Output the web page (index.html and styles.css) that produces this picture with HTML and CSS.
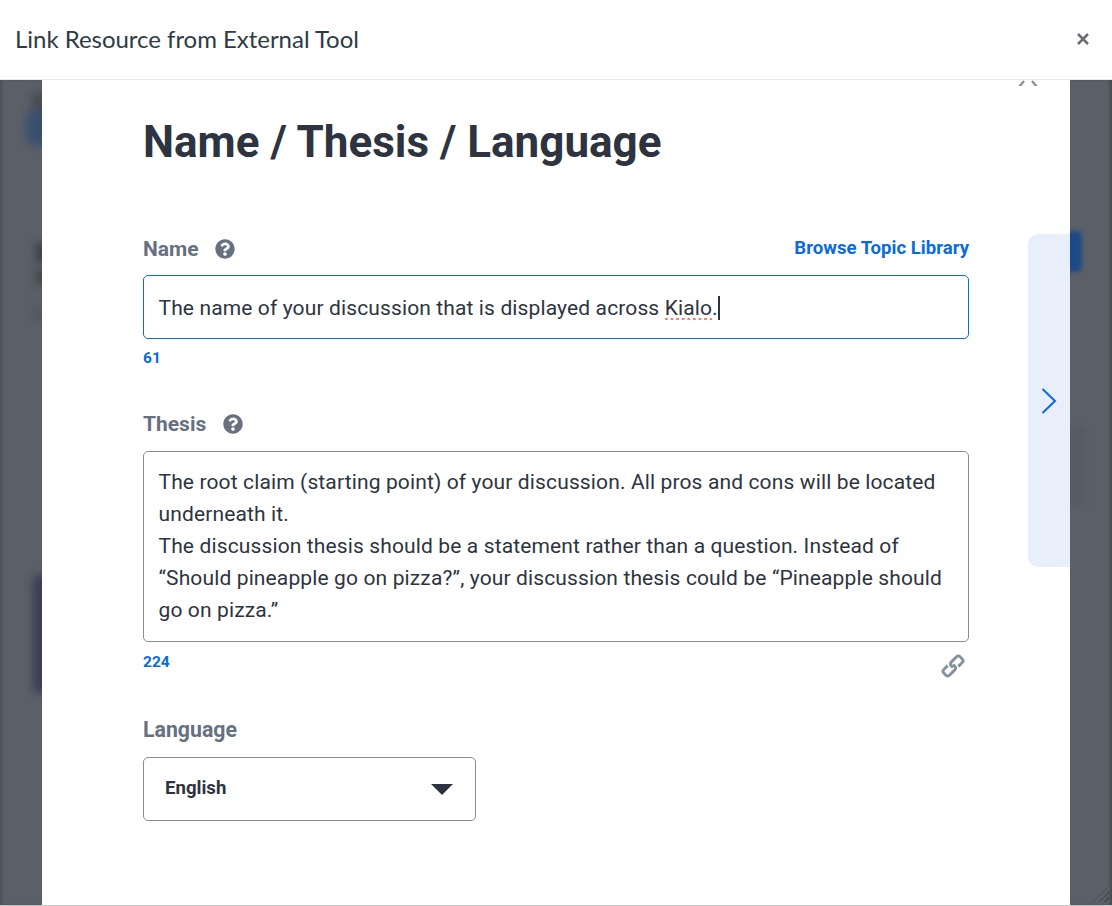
FILE: index.html
```html
<!DOCTYPE html>
<html lang="en">
<head>
    <meta charset="UTF-8">
    <meta name="viewport" content="width=device-width, initial-scale=1.0">
    <title>Link Resource from External Tool</title>
    <link rel="stylesheet" href="styles.css">
</head>
<body>
<div class="dialog">
    <header class="dialog-header">
        <h1>Link Resource from External Tool</h1>
        <svg class="dialog-close" viewBox="0 0 14 14" width="14" height="14" aria-label="Close">
            <path d="M2 2 12 12M12 2 2 12" fill="none" stroke="#6a6f75" stroke-width="2.6"/>
        </svg>
    </header>

    <div class="dialog-body">
        <div class="backdrop">
            <span class="blob blob-logo-top"></span>
            <span class="blob blob-logo"></span>
            <span class="blob blob-letter"></span>
            <span class="blob blob-letter-low"></span>
            <span class="blob blob-small"></span>
            <span class="blob blob-purple"></span>
            <span class="blob blob-button"></span>
            <span class="blob blob-faint"></span>
            <span class="resize-grip"></span>
        </div>

        <main class="sheet">
            <svg class="sheet-close" viewBox="0 0 20 6" width="20" height="6">
                <path d="M1 7 6 1M19 7 14 1" fill="none" stroke="#8b95a1" stroke-width="2.4"/>
            </svg>

            <h2>Name / Thesis / Language</h2>

            <div class="label-row label-row-name">
                <label>Name</label>
                <svg class="help-icon" viewBox="0 0 512 512" width="20" height="20">
                    <path d="M504 256c0 136.997-111.043 248-248 248S8 392.997 8 256C8 119.083 119.043 8 256 8s248 111.083 248 248zM262.655 90c-54.497 0-89.255 22.957-116.549 63.758-3.536 5.286-2.353 12.415 2.715 16.258l34.699 26.31c5.205 3.947 12.621 3.008 16.665-2.122 17.864-22.658 30.113-35.797 57.303-35.797 20.429 0 45.698 13.148 45.698 32.958 0 14.976-12.363 22.667-32.534 33.976C247.128 238.528 216 254.941 216 296v4c0 6.627 5.373 12 12 12h56c6.627 0 12-5.373 12-12v-1.333c0-28.462 83.186-29.647 83.186-106.667 0-58.002-60.165-102-116.531-102zM256 338c-25.365 0-46 20.635-46 46 0 25.364 20.635 46 46 46s46-20.636 46-46c0-25.365-20.635-46-46-46z" fill="#667080"/>
                </svg>
                <a class="browse-link" href="#">Browse Topic Library</a>
            </div>
            <div class="field field-name">
                <span>The name of your discussion that is displayed across <span class="misspelled">Kialo</span>.</span><span class="caret"></span>
            </div>
            <div class="counter">61</div>

            <div class="label-row label-row-thesis">
                <label>Thesis</label>
                <svg class="help-icon" viewBox="0 0 512 512" width="20" height="20">
                    <path d="M504 256c0 136.997-111.043 248-248 248S8 392.997 8 256C8 119.083 119.043 8 256 8s248 111.083 248 248zM262.655 90c-54.497 0-89.255 22.957-116.549 63.758-3.536 5.286-2.353 12.415 2.715 16.258l34.699 26.31c5.205 3.947 12.621 3.008 16.665-2.122 17.864-22.658 30.113-35.797 57.303-35.797 20.429 0 45.698 13.148 45.698 32.958 0 14.976-12.363 22.667-32.534 33.976C247.128 238.528 216 254.941 216 296v4c0 6.627 5.373 12 12 12h56c6.627 0 12-5.373 12-12v-1.333c0-28.462 83.186-29.647 83.186-106.667 0-58.002-60.165-102-116.531-102zM256 338c-25.365 0-46 20.635-46 46 0 25.364 20.635 46 46 46s46-20.636 46-46c0-25.365-20.635-46-46-46z" fill="#667080"/>
                </svg>
            </div>
            <div class="field field-thesis">
                The root claim (starting point) of your discussion. All pros and cons will be located underneath it.<br>
                The discussion thesis should be a statement rather than a question. Instead of “Should pineapple go on pizza?”, your discussion thesis could be “Pineapple should go on pizza.”
            </div>
            <div class="thesis-footer">
                <div class="counter">224</div>
                <svg class="link-icon" viewBox="-12 -12 24 24" width="24" height="24">
                    <g transform="rotate(-45)" fill="none" stroke="#8792a0" stroke-width="2.9">
                        <path d="M-1 1V-1.5a2.500 2.500 0 0 1 2.500-2.500H9a2.500 2.500 0 0 1 2.500 2.500V1.500a2.500 2.500 0 0 1-2.500 2.500H3.500"/>
                        <path d="M1-1V1.500a2.500 2.500 0 0 1-2.500 2.500H-9a2.500 2.500 0 0 1-2.500-2.500V-1.500a2.500 2.500 0 0 1 2.500-2.500H-3.500"/>
                    </g>
                </svg>
            </div>

            <label class="label-language">Language</label>
            <div class="select">
                <span>English</span>
                <span class="select-arrow"></span>
            </div>

            <div class="side-panel">
                <svg viewBox="0 0 18 28" width="18" height="28">
                    <path d="M2.5 2 15 14 2.5 26" fill="none" stroke="#0a6ae0" stroke-width="2"/>
                </svg>
            </div>
        </main>
    </div>
</div>
</body>
</html>
```

FILE: styles.css
```css
* {
    box-sizing: border-box;
}
html, body {
    margin: 0;
    height: 100%;
    overflow: hidden;
}
body {
    font-family: Roboto, Arial, sans-serif;
    color: #2d3440;
    background: #fff;
}
.dialog {
    display: flex;
    flex-direction: column;
    height: 906px;
    border-bottom: 1px solid #c4c6c8;
}
.dialog-header {
    display: flex;
    justify-content: space-between;
    align-items: center;
    height: 80px;
    flex: none;
    padding: 0 22px 2px 15px;
    border-bottom: 1px solid #e6e8ea;
    background: #fff;
    position: relative;
    z-index: 2;
}
.dialog-header h1 {
    margin: 0;
    font-family: Lato, Arial, sans-serif;
    font-size: 24px;
    font-weight: 400;
    letter-spacing: -0.03px;
    color: #2d3b45;
}
.dialog-close {
    display: block;
}
.dialog-body {
    flex: 1;
    position: relative;
    overflow: hidden;
    background: #5b5f67;
    padding: 0 42px;
}
.backdrop {
    position: absolute;
    inset: 0;
    overflow: hidden;
    box-shadow: inset 3px 0 3px -1px #4d5158, inset -3px 0 3px -1px #454950;
}
.blob {
    position: absolute;
    filter: blur(4px);
}
.blob-logo-top {
    left: 32px;
    top: 12px;
    width: 16px;
    height: 24px;
    background: #484c52;
}
.blob-logo {
    left: 26px;
    top: 30px;
    width: 26px;
    height: 36px;
    border-radius: 40%;
    background: #3a4f70;
}
.blob-letter {
    left: 36px;
    top: 163px;
    width: 14px;
    height: 19px;
    background: #3a3e45;
}
.blob-letter-low {
    left: 36px;
    top: 190px;
    width: 14px;
    height: 14px;
    background: #3f4349;
}
.blob-small {
    left: 32px;
    top: 228px;
    width: 16px;
    height: 12px;
    background: #53575e;
}
.blob-purple {
    left: 33px;
    top: 495px;
    width: 20px;
    height: 118px;
    border-radius: 6px;
    background: #3c3d57;
}
.blob-button {
    left: 1050px;
    top: 151px;
    width: 32px;
    height: 41px;
    border-radius: 6px;
    background: #1c4a86;
    filter: blur(2px);
}
.blob-faint {
    left: 1060px;
    top: 347px;
    width: 24px;
    height: 78px;
    background: #565a62;
    filter: blur(3px);
}
.resize-grip {
    position: absolute;
    right: 3px;
    bottom: 3px;
    width: 16px;
    height: 16px;
    background: repeating-linear-gradient(135deg, transparent 0, transparent 3px, #3d4046 3px, #3d4046 4px);
    clip-path: polygon(100% 0, 100% 100%, 0 100%);
}
.sheet {
    position: relative;
    height: 100%;
    padding: 0 101px;
    background: #fff;
}
.sheet-close {
    position: absolute;
    top: 0;
    right: 32px;
}
.sheet h2 {
    margin: 0;
    padding-top: 37px;
    font-size: 44px;
    line-height: 50px;
    font-weight: 700;
    color: #2d3440;
}
.label-row {
    display: flex;
    align-items: center;
    height: 24px;
    font-size: 21px;
    font-weight: 700;
    color: #667080;
}
.label-row-name {
    margin-top: 70px;
}
.label-row-thesis {
    margin-top: 45px;
}
.label-row label {
    margin-right: 16px;
}
.label-row-thesis label {
    margin-right: 17px;
}
.help-icon {
    flex: none;
}
.browse-link {
    margin: 0 0 2px auto;
    font-size: 18.6px;
    color: #0a6ae0;
    text-decoration: none;
}
.field {
    width: 826px;
    border: 1px solid #868e99;
    border-radius: 5px;
    padding: 14px 15px 14px 14.5px;
    font-size: 21px;
    letter-spacing: 0.13px;
    line-height: 32px;
    color: #2d3440;
    background: #fff;
}
.field-name {
    display: flex;
    align-items: center;
    height: 64px;
    margin-top: 14px;
    padding-top: 16px;
    letter-spacing: 0.125px;
    border-color: #0a6ae0;
}
.field-thesis {
    height: 191px;
    margin-top: 15px;
}
.misspelled {
    background: linear-gradient(90deg, #f0807a 0 3px, transparent 3px 5.6px) left bottom / 5.6px 2px repeat-x;
}
.caret {
    width: 2px;
    height: 24px;
    margin-left: 0;
    background: #2d3440;
}
.counter {
    margin-top: 10px;
    font-size: 15.5px;
    line-height: 18px;
    font-weight: 700;
    color: #0a6ae0;
}
.thesis-footer {
    display: flex;
    justify-content: space-between;
    width: 826px;
}
.thesis-footer .counter {
    margin-top: 11px;
}
.link-icon {
    margin: 12px 4px 0 0;
}
.label-language {
    display: block;
    margin-top: 40px;
    font-size: 21.3px;
    line-height: 24px;
    font-weight: 700;
    color: #667080;
}
.select {
    display: flex;
    justify-content: space-between;
    align-items: center;
    width: 333px;
    height: 64px;
    margin-top: 15px;
    padding: 0 22px 2px 21px;
    border: 1px solid #868e99;
    border-radius: 5px;
    font-size: 18.6px;
    font-weight: 700;
}
.select-arrow {
    width: 0;
    height: 0;
    margin-top: 2px;
    border-left: 11px solid transparent;
    border-right: 11px solid transparent;
    border-top: 11px solid #2d3440;
}
.side-panel {
    position: absolute;
    top: 154px;
    right: 0;
    width: 42px;
    height: 333px;
    display: flex;
    align-items: center;
    justify-content: center;
    border-radius: 10px 0 0 10px;
    background: #e8effa;
}
```
